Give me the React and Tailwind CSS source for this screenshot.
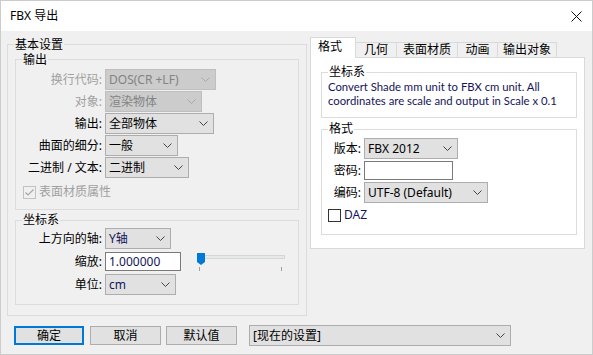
import React from 'react';

const FONT = { fontFamily: '"Noto Sans", "Noto Sans CJK SC", sans-serif' };

const Chevron = ({ color = '#444444' }) => (
    <svg width="9" height="5" viewBox="0 0 9 5" className="shrink-0">
        <path d="M0.5 0.5 L4.5 4.5 L8.5 0.5" fill="none" stroke={color} strokeWidth="1" />
    </svg>
);

const Combo = ({ value, className = '', disabled, valueClass = '' }) => (
    <div
        className={`flex h-[21px] shrink-0 items-center justify-between border pl-[3px] pr-[5px] ${
            disabled ? 'border-[#bfbfbf] bg-[#cccccc] text-[#838383]' : 'border-[#adadad] bg-[#e1e1e1] text-black'
        } ${className}`}
    >
        <span className={`whitespace-nowrap ${valueClass}`}>{value}</span>
        <Chevron color={disabled ? '#a8a8a8' : '#444444'} />
    </div>
);

const TextBox = ({ value = '', className = '' }) => (
    <div className={`flex h-[19px] shrink-0 items-center border border-[#7a7a7a] bg-white pl-[3px] text-[#14145a] ${className}`}>
        {value}
    </div>
);

// group box, drawn with fieldset + legend like a win32 GROUPBOX
const Group = ({ title, className = '', legendClass = 'leading-[16px]', children }) => (
    <fieldset className={`shrink-0 border border-[#dcdcdc] ${className}`}>
        <legend className={`ml-[6px] px-px ${legendClass}`}>{title}</legend>
        {children}
    </fieldset>
);

const Row = ({ label, disabled, labelClass = 'w-[89px]', className = '', children }) => (
    <div className={`flex items-center ${className}`}>
        <span className={`shrink-0 whitespace-nowrap pr-[3px] text-right ${disabled ? 'text-[#a0a0a0]' : ''} ${labelClass}`}>
            {label}
        </span>
        {children}
    </div>
);

const Slider = () => (
    <div className="relative ml-[16px] h-[19px] w-[88px]">
        <div className="absolute left-0 top-[3px] h-[4px] w-[88px] border border-[#d6d6d6] bg-[#e7eaea]"></div>
        <svg className="absolute left-0 top-px" width="8" height="12" viewBox="0 0 8 12">
            <path d="M0 0 H8 V9 L4 12 L0 9 Z" fill="#0078d7" />
        </svg>
        <div className="absolute left-[2px] top-[15px] h-[4px] w-px bg-[#a0a0a0]"></div>
        <div className="absolute left-[84px] top-[15px] h-[4px] w-px bg-[#a0a0a0]"></div>
    </div>
);

const Button = ({ children, primary, className = '' }) => (
    <div
        className={`flex h-[19px] shrink-0 items-center justify-center bg-[#e1e1e1] ${
            primary ? 'border-2 border-[#0078d7]' : 'border border-[#adadad]'
        } ${className}`}
    >
        {children}
    </div>
);

export default function App() {
    return (
        <div
            className="flex h-[355px] w-[593px] flex-col overflow-hidden border border-[#cccccc] bg-[#f0f0f0] text-[12px] leading-[16px] text-black"
            style={FONT}
        >
            {/* title bar */}
            <div className="flex h-[30px] shrink-0 items-center justify-between bg-white pl-[9px] pr-[10px]">
                <span>FBX 导出</span>
                <svg width="11" height="11" viewBox="0 0 11 11">
                    <path d="M0.5 0.5 L10.5 10.5 M10.5 0.5 L0.5 10.5" stroke="#111" strokeWidth="1" />
                </svg>
            </div>

            <div className="flex h-[285px] shrink-0 items-start">
                {/* left side */}
                <Group title="基本设置" legendClass="leading-[15px]" className="ml-[6px] mt-[6px] h-[279px] w-[300px]">
                    <Group title="输出" legendClass="leading-[15px]" className="ml-[7px] h-[158px] w-[284px]">
                        <div className="flex flex-col gap-px pt-[2px]">
                            <Row label="换行代码:" disabled>
                                <Combo value="DOS(CR +LF)" disabled className="w-[111px]" />
                            </Row>
                            <Row label="对象:" disabled>
                                <Combo value="渲染物体" disabled className="w-[97px]" />
                            </Row>
                            <Row label="输出:">
                                <Combo value="全部物体" className="w-[109px]" />
                            </Row>
                            <Row label="曲面的细分:">
                                <Combo value="一般" className="w-[73px]" />
                            </Row>
                            <Row label="二进制 / 文本:">
                                <Combo value="二进制" className="w-[84px]" />
                            </Row>
                            <div className="ml-[7px] mt-[5px] flex items-center gap-[3px]">
                                <svg width="13" height="13" viewBox="0 0 13 13">
                                    <rect x="0.5" y="0.5" width="12" height="12" fill="#f0f0f0" stroke="#c2c2c2" />
                                    <path d="M2.5 6.5 L5 9 L10.5 3.5" fill="none" stroke="#a6a6a6" strokeWidth="1.2" />
                                </svg>
                                <span className="text-[#a0a0a0]">表面材质属性</span>
                            </div>
                        </div>
                    </Group>

                    <Group title="坐标系" className="ml-[7px] mt-[2px] h-[93px] w-[284px]">
                        <div className="flex flex-col">
                            <Row label="上方向的轴:">
                                <Combo value="Y轴" className="w-[66px]" valueClass="text-[#14145a]" />
                            </Row>
                            <Row label="缩放:" className="mt-[3px]">
                                <TextBox value="1.000000" className="w-[76px]" />
                                <Slider />
                            </Row>
                            <Row label="单位:" className="mt-[3px]">
                                <Combo value="cm" className="w-[71px]" valueClass="text-[#14145a]" />
                            </Row>
                        </div>
                    </Group>
                </Group>

                {/* right side: tabs */}
                <div className="ml-[3px] mt-[6px] flex flex-col">
                    <div className="flex h-[20px] items-end">
                        <div className="relative z-10 -mb-px flex h-[21px] w-[46px] items-start justify-center border-x border-t border-[#d9d9d9] bg-white pt-[1px] pr-[6px]">
                            格式
                        </div>
                        <div className="flex h-[15px] w-[41px] items-center justify-center border-r border-t border-[#d9d9d9]">几何</div>
                        <div className="flex h-[15px] w-[61px] items-center justify-center border-r border-t border-[#d9d9d9]">表面材质</div>
                        <div className="flex h-[15px] w-[40px] items-center justify-center border-r border-t border-[#d9d9d9]">动画</div>
                        <div className="flex h-[15px] w-[59px] items-center justify-center border-r border-t border-[#d9d9d9]">输出对象</div>
                    </div>

                    <div className="flex h-[192px] w-[275px] flex-col border border-[#d9d9d9] bg-white">
                        <Group title="坐标系" className="ml-[10px] mt-[6px] h-[54px] w-[256px]">
                            <p
                                className="whitespace-nowrap pl-[6px] text-[11.3px] leading-[14px] text-[#14145a]"
                                style={{ fontFamily: 'Lato, "Noto Sans", sans-serif' }}
                            >
                                Convert Shade mm unit to FBX cm unit. All
                                <br />
                                coordinates are scale and output in Scale x 0.1
                            </p>
                        </Group>

                        <Group title="格式" className="ml-[10px] mt-[3px] h-[114px] w-[256px]">
                            <div className="flex flex-col pt-px">
                                <Row label="版本:" labelClass="w-[42px]">
                                    <Combo value="FBX 2012" className="w-[94px]" />
                                </Row>
                                <Row label="密码:" labelClass="w-[42px]" className="mt-[2px]">
                                    <TextBox className="w-[89px]" />
                                </Row>
                                <Row label="编码:" labelClass="w-[42px]" className="mt-[2px]">
                                    <Combo value="UTF-8 (Default)" className="w-[124px]" />
                                </Row>
                                <div className="ml-[6px] mt-[4px] flex items-center gap-[3px]">
                                    <div className="h-[13px] w-[13px] border border-[#333333] bg-white"></div>
                                    <span className="text-[#14145a]">DAZ</span>
                                </div>
                            </div>
                        </Group>
                    </div>
                </div>
            </div>

            {/* bottom buttons */}
            <div className="mt-[9px] flex h-[21px] items-center">
                <Button primary className="ml-[13px] w-[70px]">确定</Button>
                <Button className="ml-[6px] w-[71px]">取消</Button>
                <Button className="ml-[5px] w-[71px]">默认值</Button>
                <Combo value="[现在的设置]" className="ml-[12px] w-[262px]" />
            </div>
        </div>
    );
}
